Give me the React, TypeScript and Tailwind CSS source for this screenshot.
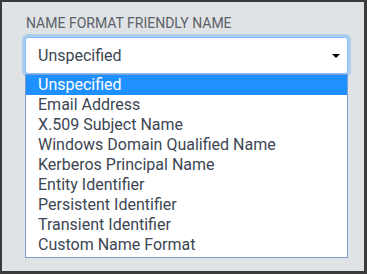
import React from 'react';

const options = [
  'Unspecified',
  'Email Address',
  'X.509 Subject Name',
  'Windows Domain Qualified Name',
  'Kerberos Principal Name',
  'Entity Identifier',
  'Persistent Identifier',
  'Transient Identifier',
  'Custom Name Format',
];

const App: React.FC = () => {
  const selected = 'Unspecified';

  return (
    <div className="w-[367px] h-[274px] bg-[#dfe3e6] border-[#3b3b3b] border-l-2 border-t-2 border-r-[3px] border-b-[3px] pl-[23px] pr-[16px] pt-[11px] font-['Roboto',sans-serif]">
      {/* Label */}
      <div className="ml-[1px] text-[14px] leading-[20px] uppercase text-[#5d6167]">
        Name Format Friendly Name
      </div>

      {/* Select */}
      <div className="mt-[4px] h-[37px] flex items-center justify-between bg-white border border-[#80bdff] rounded-[3px] shadow-[0_0_0_3px_rgba(0,123,255,0.22)] pl-[12px] pr-[7px]">
        <span className="text-[16px] text-[#3c4653]">{selected}</span>
        <span className="w-0 h-0 border-x-[4px] border-x-transparent border-t-[4px] border-t-black" />
      </div>

      {/* Dropdown list */}
      <ul className="bg-white border border-[#7f9ccf] pb-[2px]">
        {options.map((o) => (
          <li
            key={o}
            className={`h-[20px] pl-[12px] text-[16px] leading-[20px] whitespace-nowrap ${
              o === selected ? 'bg-[#1e90ff] text-white' : 'text-[#3c4653]'
            }`}
          >
            {o}
          </li>
        ))}
      </ul>
    </div>
  );
};

export default App;
